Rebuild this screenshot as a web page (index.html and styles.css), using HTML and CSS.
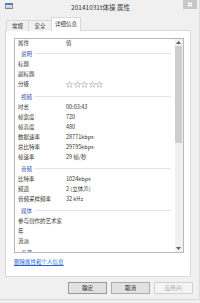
FILE: index.html
```html
<!DOCTYPE html>
<html lang="zh-CN">
<head>
<meta charset="utf-8">
<title>20141031t体操 属性</title>
<link rel="stylesheet" href="styles.css">
</head>
<body>
<div class="win">
  <div class="titlebar">
    <div class="tb-left">
      <svg class="appicon" width="8" height="6" viewBox="0 0 8 6">
        <rect x="0.5" y="0.5" width="7" height="5" fill="#fff" stroke="#7d8a99"/>
        <rect x="0.5" y="0.5" width="7" height="1.6" fill="#3b79c8"/>
        <line x1="1.5" y1="3.3" x2="6.5" y2="3.3" stroke="#9aa6b4" stroke-width="0.6"/>
        <line x1="1.5" y1="4.4" x2="6.5" y2="4.4" stroke="#9aa6b4" stroke-width="0.6"/>
      </svg>
    </div>
    <div class="title">20141031t体操 属性</div>
    <div class="tb-right">
      <div class="close">
        <svg width="14" height="9" viewBox="0 0 14 9">
          <line x1="5" y1="2.5" x2="9" y2="6.5" stroke="#fff" stroke-width="1.2"/>
          <line x1="9" y1="2.5" x2="5" y2="6.5" stroke="#fff" stroke-width="1.2"/>
        </svg>
      </div>
    </div>
  </div>

  <div class="tabs">
    <div class="tab t1">常规</div>
    <div class="tab t2">安全</div>
    <div class="tab t3 active">详细信息</div>
  </div>

  <div class="panel">
    <div class="listbox">
      <div class="list">
        <div class="row head"><span class="k">属性</span><span class="v">值</span></div>
        <div class="group"><span>说明</span></div>
        <div class="row"><span class="k">标题</span><span class="v"></span></div>
        <div class="row"><span class="k">副标题</span><span class="v"></span></div>
        <div class="row rating"><span class="k">分级</span>
          <span class="v stars">
            <svg class="star" viewBox="0 0 10 10"><polygon points="5,0.8 6.2,3.8 9.4,3.9 6.9,5.9 7.8,9.1 5,7.3 2.2,9.1 3.1,5.9 0.6,3.9 3.8,3.8" fill="#fff" stroke="#a9a9a9" stroke-width="0.9"/></svg>
            <svg class="star" viewBox="0 0 10 10"><polygon points="5,0.8 6.2,3.8 9.4,3.9 6.9,5.9 7.8,9.1 5,7.3 2.2,9.1 3.1,5.9 0.6,3.9 3.8,3.8" fill="#fff" stroke="#a9a9a9" stroke-width="0.9"/></svg>
            <svg class="star" viewBox="0 0 10 10"><polygon points="5,0.8 6.2,3.8 9.4,3.9 6.9,5.9 7.8,9.1 5,7.3 2.2,9.1 3.1,5.9 0.6,3.9 3.8,3.8" fill="#fff" stroke="#a9a9a9" stroke-width="0.9"/></svg>
            <svg class="star" viewBox="0 0 10 10"><polygon points="5,0.8 6.2,3.8 9.4,3.9 6.9,5.9 7.8,9.1 5,7.3 2.2,9.1 3.1,5.9 0.6,3.9 3.8,3.8" fill="#fff" stroke="#a9a9a9" stroke-width="0.9"/></svg>
            <svg class="star" viewBox="0 0 10 10"><polygon points="5,0.8 6.2,3.8 9.4,3.9 6.9,5.9 7.8,9.1 5,7.3 2.2,9.1 3.1,5.9 0.6,3.9 3.8,3.8" fill="#fff" stroke="#a9a9a9" stroke-width="0.9"/></svg>
          </span>
        </div>
        <div class="group"><span>视频</span></div>
        <div class="row"><span class="k">时长</span><span class="v">00:03:43</span></div>
        <div class="row"><span class="k">帧宽度</span><span class="v">720</span></div>
        <div class="row"><span class="k">帧高度</span><span class="v">480</span></div>
        <div class="row"><span class="k">数据速率</span><span class="v">28771kbps</span></div>
        <div class="row"><span class="k">总比特率</span><span class="v">29795kbps</span></div>
        <div class="row"><span class="k">帧速率</span><span class="v">29 帧/秒</span></div>
        <div class="group"><span>音频</span></div>
        <div class="row"><span class="k">比特率</span><span class="v">1024kbps</span></div>
        <div class="row"><span class="k">频道</span><span class="v">2 (立体声)</span></div>
        <div class="row"><span class="k">音频采样频率</span><span class="v">32 kHz</span></div>
        <div class="group"><span>媒体</span></div>
        <div class="row"><span class="k">参与创作的艺术家</span><span class="v"></span></div>
        <div class="row"><span class="k">年</span><span class="v"></span></div>
        <div class="row"><span class="k">流派</span><span class="v"></span></div>
        <div class="group"><span>来源</span></div>
      </div>
      <div class="scrollbar">
        <div class="sb-btn">
          <svg width="5" height="3" viewBox="0 0 5 3"><polygon points="0,3 2.5,0 5,3" fill="#606060"/></svg>
        </div>
        <div class="sb-thumb"></div>
        <div class="sb-track"></div>
        <div class="sb-btn">
          <svg width="5" height="3" viewBox="0 0 5 3"><polygon points="0,0 2.5,3 5,0" fill="#606060"/></svg>
        </div>
      </div>
    </div>
    <a class="link" href="#">删除属性和个人信息</a>
  </div>

  <div class="buttons">
    <button class="btn default">确定</button>
    <button class="btn">取消</button>
    <button class="btn disabled">应用(A)</button>
  </div>
</div>
</body>
</html>
```

FILE: styles.css
```css
* { box-sizing: border-box; }

html, body {
  margin: 0;
  padding: 0;
  width: 200px;
  height: 303px;
  overflow: hidden;
  background: #f0f0f0;
}

body {
  font-family: "Noto Sans CJK SC", "Noto Sans", "Liberation Sans", sans-serif;
  font-size: 5.5px;
  color: #333;
}

.win {
  width: 200px;
  height: 300px;
  display: flex;
  flex-direction: column;
  background: #f0f0f0;
  border-right: 1px solid #dcdcdc;
  border-bottom: 1px solid #d6d6d6;
}

/* title bar */
.titlebar {
  height: 17px;
  display: grid;
  grid-template-columns: 1fr auto 1fr;
  align-items: start;
}
.tb-left {
  padding: 3px 0 0 5px;
  display: flex;
}
.appicon { display: block; }
.title {
  font-size: 6.5px;
  line-height: 14px;
  color: #333;
  white-space: nowrap;
  padding-left: 2px;
}
.tb-right {
  display: flex;
  justify-content: flex-end;
  padding-right: 2px;
}
.close {
  width: 14px;
  height: 9px;
  background: #c7c7c7;
}
.close svg { display: block; }

/* tabs */
.tabs {
  display: flex;
  align-items: flex-end;
  height: 14px;
  padding-left: 6px;
  margin-bottom: -1px;
  position: relative;
  z-index: 1;
}
.tab {
  height: 11px;
  border: 1px solid #d9d9d9;
  border-bottom: none;
  background: #f0f0f0;
  line-height: 10px;
  text-align: center;
  white-space: nowrap;
}
.t1 { width: 23px; }
.t2 { width: 24px; margin-left: -1px; }
.t3 { width: 30px; margin-left: -1px; }
.tab.active {
  height: 14px;
  background: #fff;
  line-height: 12px;
}

/* panel */
.panel {
  margin: 0 8px 0 5px;
  height: 247px;
  background: #fff;
  border: 1px solid #d9d9d9;
  padding: 7px 6px 0 8px;
  display: flex;
  flex-direction: column;
}

.listbox {
  height: 215px;
  border: 1px solid #b9b9b9;
  display: flex;
  overflow: hidden;
}

.list {
  flex: 1;
  overflow: hidden;
  padding-right: 4px;
}

.row {
  display: flex;
  height: 10px;
  line-height: 10px;
  white-space: nowrap;
}
.row.head {
  height: 8px;
  line-height: 8px;
  color: #3a3a3a;
}
.row.rating { height: 11px; line-height: 11px; }
.k {
  width: 51px;
  padding-left: 3px;
  flex: none;
}
.v { flex: 1; }

.stars {
  display: flex;
  align-items: center;
  gap: 0.6px;
}
.star {
  width: 7px;
  height: 7px;
  display: block;
}

.group {
  height: 12px;
  display: flex;
  align-items: center;
  padding: 1px 0 0 6px;
  color: #3654b3;
  line-height: 10px;
}
.group::after {
  content: "";
  flex: 1;
  height: 1px;
  background: #dde4f2;
  margin-left: 3px;
}

/* scrollbar */
.scrollbar {
  width: 8px;
  flex: none;
  display: flex;
  flex-direction: column;
  background: #f0f0f0;
  padding-right: 1px;
}
.sb-btn {
  height: 7px;
  display: flex;
  align-items: center;
  justify-content: center;
  flex: none;
}
.sb-btn svg { display: block; }
.sb-thumb {
  height: 97px;
  background: #cdcdcd;
  flex: none;
}
.sb-track { flex: 1; }

/* link */
.link {
  margin-top: 5px;
  line-height: 8px;
  color: #1a66cc;
  text-decoration: underline;
  align-self: flex-start;
}

/* buttons */
.buttons {
  display: flex;
  justify-content: flex-end;
  gap: 4px;
  padding: 5px 6px 0 0;
}
.btn {
  width: 39px;
  height: 12px;
  margin: 0;
  padding: 0;
  font-family: inherit;
  font-size: 5.5px;
  line-height: 10px;
  color: #222;
  background: #e1e1e1;
  border: 1px solid #adadad;
  border-radius: 0;
}
.btn.default { border-color: #9a9a9a; }
.btn.disabled {
  color: #a8a8a8;
  background: #f4f4f4;
  border-color: #d0d0d0;
}
```
